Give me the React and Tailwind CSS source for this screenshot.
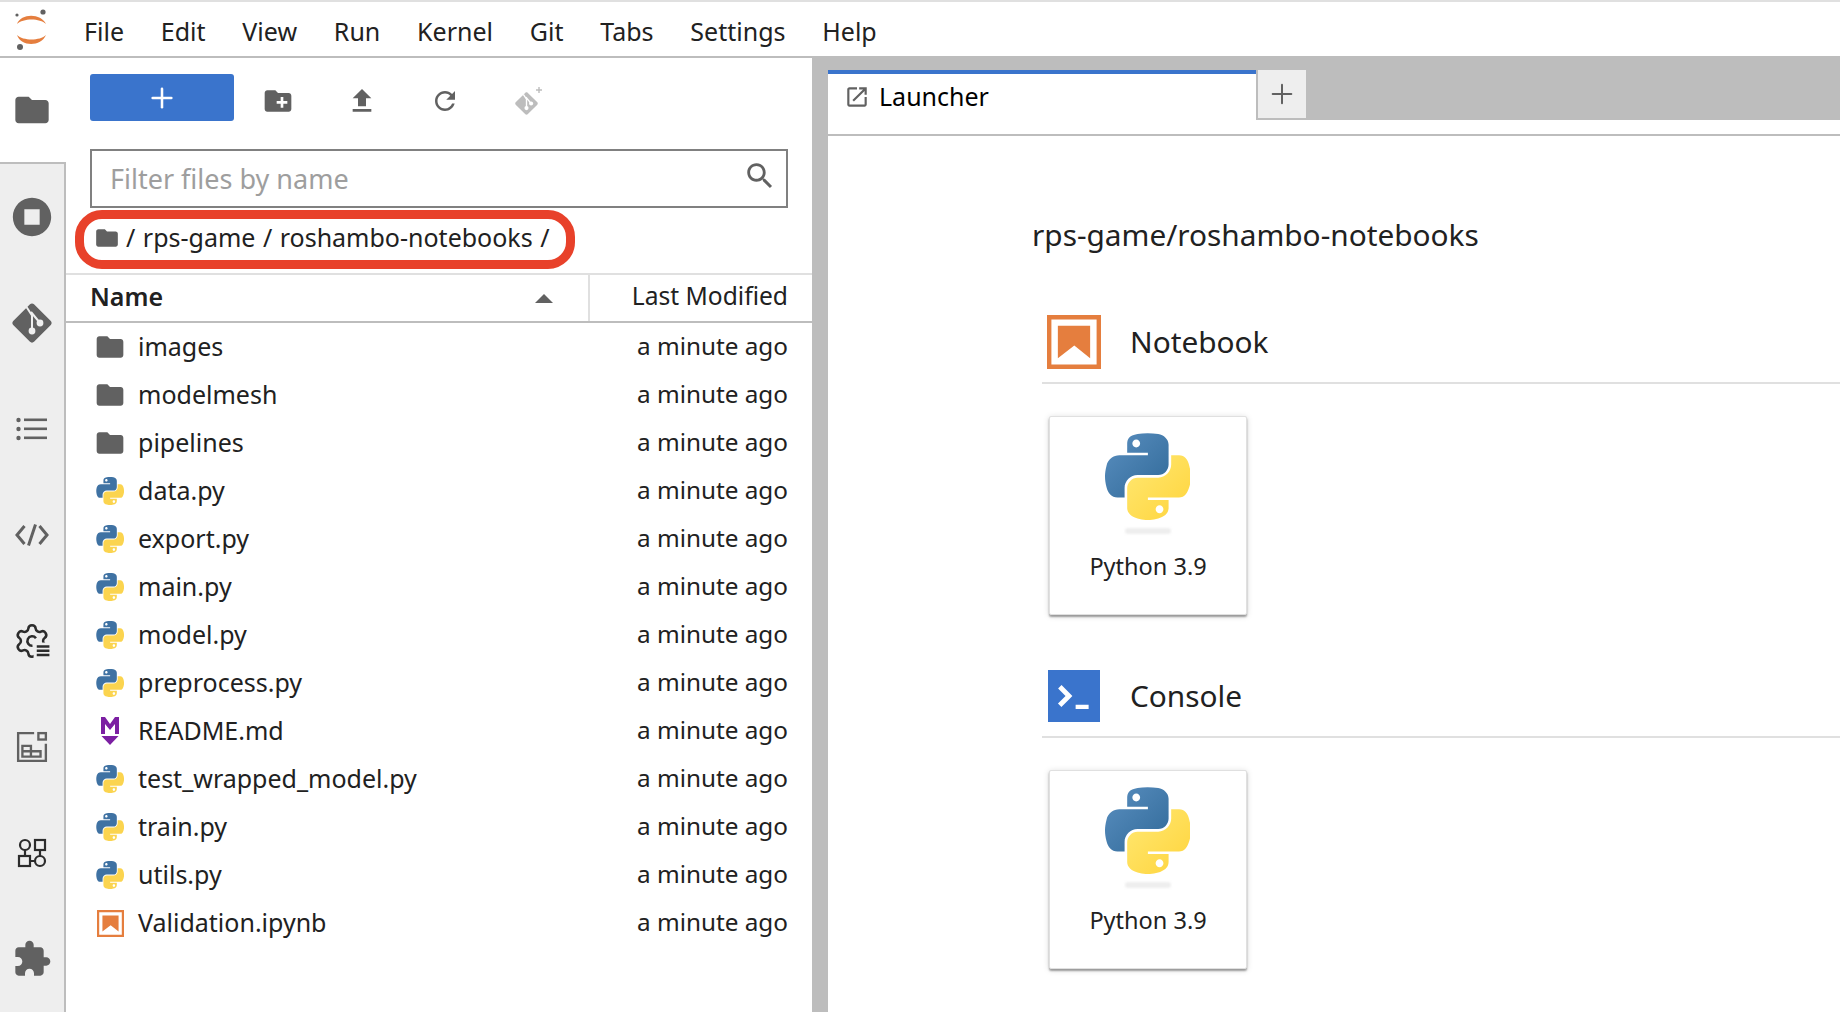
import { CodeXml, Plus } from 'lucide-react';

const FOLDER = 'M10 4H4c-1.1 0-1.99.9-1.99 2L2 18c0 1.1.9 2 2 2h16c1.1 0 2-.9 2-2V8c0-1.1-.9-2-2-2h-8l-2-2z';
const BLUE_PATH = 'M 54.918785,9.1927421e-4 C 50.335132,0.02221727 45.957846,0.41313697 42.106285,1.0946693 30.760069,3.0991731 28.700036,7.2947714 28.700035,15.032169 v 10.21875 h 26.8125 v 3.40625 h -26.8125 -10.0625 c -7.792459,0 -14.6157588,4.683717 -16.7499998,13.59375 -2.46181998,10.212966 -2.57101508,16.586023 0,27.25 1.9059283,7.937852 6.4575432,13.593748 14.2499998,13.59375 h 9.21875 v -12.25 c 0,-8.849902 7.657144,-16.656248 16.75,-16.65625 h 26.78125 c 7.454951,0 13.406253,-6.138164 13.40625,-13.625 v -25.53125 c 0,-7.2663386 -6.12998,-12.7247771 -13.40625,-13.9374997 C 64.281548,0.32794397 59.502438,-0.02037903 54.918785,9.1927421e-4 Z m -14.5,8.21875012579 c 2.769547,0 5.03125,2.2986456 5.03125,5.1249996 -2e-6,2.816336 -2.261703,5.09375 -5.03125,5.09375 -2.779476,-1e-6 -5.03125,-2.277415 -5.03125,-5.09375 -10e-7,-2.826353 2.251774,-5.1249996 5.03125,-5.1249996 z';
const YELLOW_PATH = 'm 85.637535,28.657169 v 11.90625 c 0,9.230755 -7.825895,16.999999 -16.75,17 h -26.78125 c -7.335833,0 -13.406249,6.278483 -13.40625,13.625 v 25.531247 c 0,7.266344 6.318588,11.540324 13.40625,13.625004 8.487331,2.49561 16.626237,2.94663 26.78125,0 6.750155,-1.95439 13.406253,-5.88761 13.40625,-13.625004 V 86.500919 h -26.78125 v -3.40625 h 26.78125 13.406254 c 7.792461,0 10.696251,-5.435408 13.406241,-13.59375 2.79933,-8.398886 2.74474,-16.475776 0,-27.25 -1.92578,-7.757441 -5.60387,-13.59375 -13.406241,-13.59375 z m -15.0625,64.65625 c 2.779478,3e-6 5.03125,2.277417 5.03125,5.093747 -2e-6,2.826354 -2.251775,5.125004 -5.03125,5.125004 -2.76955,0 -5.03125,-2.29865 -5.03125,-5.125004 2e-6,-2.81633 2.261697,-5.093747 5.03125,-5.093747 z';

const files = [
  { name: 'images', type: 'folder' },
  { name: 'modelmesh', type: 'folder' },
  { name: 'pipelines', type: 'folder' },
  { name: 'data.py', type: 'py' },
  { name: 'export.py', type: 'py' },
  { name: 'main.py', type: 'py' },
  { name: 'model.py', type: 'py' },
  { name: 'preprocess.py', type: 'py' },
  { name: 'README.md', type: 'md' },
  { name: 'test_wrapped_model.py', type: 'py' },
  { name: 'train.py', type: 'py' },
  { name: 'utils.py', type: 'py' },
  { name: 'Validation.ipynb', type: 'nb' },
];

const menus = ['File', 'Edit', 'View', 'Run', 'Kernel', 'Git', 'Tabs', 'Settings', 'Help'];

function Mat({ d, className }) {
  return (
    <svg viewBox="0 0 24 24" className={className} fill="#616161" fillRule="evenodd">
      <path d={d} />
    </svg>
  );
}

function JupyterLogo() {
  return (
    <svg viewBox="0 0 40 44" className="w-[40px] h-[44px]">
      <path d="M5 17C9 6 29 6 34 17C28 11 11 11 5 17Z" fill="#e57e3e" />
      <path d="M5 28C11 34 28 34 34 28C29 40 9 40 5 28Z" fill="#e57e3e" />
      <circle cx="31" cy="5" r="2.6" fill="#616161" />
      <circle cx="5" cy="8" r="1.6" fill="#616161" />
      <circle cx="8" cy="40" r="3" fill="#616161" />
    </svg>
  );
}

function PythonFlat({ className }) {
  return (
    <svg viewBox="0 0 110 112" className={className}>
      <path d={BLUE_PATH} fill="#3f72a3" />
      <path d={YELLOW_PATH} fill="#fbd44f" />
    </svg>
  );
}

function PythonLogo({ id }) {
  return (
    <svg viewBox="0 0 110 112" className="w-[85px] h-[87px] -ml-[2px]">
      <defs>
        <linearGradient id={`${id}b`} x1="0" y1="0" x2="1" y2="1">
          <stop offset="0" stopColor="#5a8fc0" />
          <stop offset="1" stopColor="#306998" />
        </linearGradient>
        <linearGradient id={`${id}y`} x1="0" y1="0" x2="1" y2="1">
          <stop offset="0" stopColor="#ffe873" />
          <stop offset="1" stopColor="#ffd43b" />
        </linearGradient>
      </defs>
      <path d={BLUE_PATH} fill={`url(#${id}b)`} />
      <path d={YELLOW_PATH} fill={`url(#${id}y)`} />
    </svg>
  );
}

function NotebookIcon({ className }) {
  return (
    <svg viewBox="1.8 1.8 18.4 18.4" className={className} fill="#e57e3e">
      <path d="M18.7 3.3v15.4H3.3V3.3h15.4m1.5-1.5H1.8v18.4h18.4V1.8z" />
      <path d="M16.5 16.5l-5.4-4.3-5.6 4.3v-11h11z" />
    </svg>
  );
}

function MarkdownIcon() {
  return (
    <svg viewBox="0 0 20 28" className="w-[20px] h-[28px]" fill="#7b1fa2">
      <path d="M1 0H5L10 7L15 0H19V17H15V7L10 13L5 7V17H1Z" />
      <path d="M1.5 19H18.5L10 28Z" />
    </svg>
  );
}

// diamond git mark, the branches are knocked out in the background colour
function GitMark({ className, fill, bg }) {
  return (
    <svg viewBox="0 0 40 40" className={className}>
      <path d="M18 1.2C19.1.1 20.9.1 22 1.2L38.8 18C39.9 19.1 39.9 20.9 38.8 22L22 38.8C20.9 39.9 19.1 39.9 18 38.8L1.2 22C.1 20.9.1 19.1 1.2 18Z" fill={fill} />
      <path d="M14.5 4L20 12.5V28M19 9L28 20" fill="none" stroke={bg} strokeWidth="2" />
      <circle cx="20" cy="28" r="3.4" fill={bg} />
      <circle cx="28" cy="20" r="3.4" fill={bg} />
    </svg>
  );
}

function ListIcon() {
  return (
    <svg viewBox="0 0 32 24" className="w-[32px] h-[24px]" fill="#616161">
      <circle cx="2.5" cy="3" r="2.2" />
      <circle cx="2.5" cy="12" r="2.2" />
      <circle cx="2.5" cy="21" r="2.2" />
      <rect x="8" y="1.5" width="23" height="2.6" />
      <rect x="8" y="10.5" width="23" height="2.6" />
      <rect x="8" y="19.5" width="23" height="2.6" />
    </svg>
  );
}

function CodeIcon() {
  return (
    <svg viewBox="0 0 34 22" className="w-[34px] h-[22px]" fill="none" stroke="#616161" strokeWidth="3">
      <path d="M9.5 2L2 11L9.5 20" />
      <path d="M13.5 21.5L20.5 .5" />
      <path d="M24.5 2L32 11L24.5 20" />
    </svg>
  );
}

function GearListIcon() {
  return (
    <svg viewBox="0 0 24 24" className="w-[38px] h-[38px]" fill="none" stroke="#2c2c2c" strokeWidth="1.6">
      <path d="M9.671 4.136a2.34 2.34 0 0 1 4.659 0 2.34 2.34 0 0 0 3.319 1.915 2.34 2.34 0 0 1 2.33 4.033 2.34 2.34 0 0 0 0 3.831 2.34 2.34 0 0 1-2.33 4.033 2.34 2.34 0 0 0-3.319 1.915 2.34 2.34 0 0 1-4.659 0 2.34 2.34 0 0 0-3.32-1.915 2.34 2.34 0 0 1-2.33-4.033 2.34 2.34 0 0 0 0-3.831A2.34 2.34 0 0 1 6.35 6.051a2.34 2.34 0 0 0 3.319-1.915" />
      <path d="M14.5 10.2a3 3 0 1 0-2.2 4.8" />
      <rect x="13" y="13" width="11" height="11" fill="#eeeeee" stroke="none" />
      <path d="M15 15.5H23M15 18.2H23M15 20.9H23" />
    </svg>
  );
}

function DashIcon() {
  return (
    <svg viewBox="0 0 30 30" className="w-[32px] h-[32px]" fill="none" stroke="#616161" strokeWidth="2.2">
      <path d="M17 2H2V28H28V12" />
      <rect x="21" y="2" width="7" height="6" />
      <path d="M6 14H14V24H6ZM14 19H23V24H14ZM6 19H14" />
    </svg>
  );
}

function NodesIcon() {
  return (
    <svg viewBox="0 0 30 30" className="w-[30px] h-[30px]" fill="none" stroke="#2c2c2c" strokeWidth="2.2">
      <circle cx="8" cy="7" r="5" />
      <rect x="18" y="2" width="10" height="10" />
      <rect x="2" y="18" width="11" height="10" />
      <circle cx="23" cy="23" r="5" />
      <path d="M8 12V18M23 12V18M13 23H18" />
    </svg>
  );
}

function CloneIcon() {
  return (
    <svg viewBox="0 0 32 32" className="w-[32px] h-[32px]">
      <svg x="2" y="7" width="23" height="23" viewBox="0 0 40 40">
        <path d="M18 1.2C19.1.1 20.9.1 22 1.2L38.8 18C39.9 19.1 39.9 20.9 38.8 22L22 38.8C20.9 39.9 19.1 39.9 18 38.8L1.2 22C.1 20.9.1 19.1 1.2 18Z" fill="#bdbdbd" />
        <path d="M14.5 4L20 12.5V28M19 9L28 20" fill="none" stroke="#fff" strokeWidth="2.4" />
        <circle cx="20" cy="28" r="3.6" fill="#fff" />
        <circle cx="28" cy="20" r="3.6" fill="#fff" />
      </svg>
      <path d="M26 2V8M23 5H29" stroke="#bdbdbd" strokeWidth="1.4" />
    </svg>
  );
}

function SideTab({ children }) {
  return <div className="h-[106px] flex items-center justify-center">{children}</div>;
}

function Sidebar() {
  return (
    <div className="w-[66px] flex flex-col shrink-0">
      <div className="h-[104px] bg-white flex items-center justify-center pr-[2px]">
        <Mat d={FOLDER} className="w-[40px] h-[40px]" />
      </div>
      <div className="flex-1 bg-[#eeeeee] border-t-2 border-r-2 border-[#bdbdbd]">
        <SideTab>
          <Mat d="M12 2C6.48 2 2 6.48 2 12s4.48 10 10 10 10-4.48 10-10S17.52 2 12 2zm4 14H8V8h8v8z" className="w-[46px] h-[46px]" />
        </SideTab>
        <SideTab>
          <GitMark className="w-[40px] h-[40px]" fill="#616161" bg="#eeeeee" />
        </SideTab>
        <SideTab>
          <ListIcon />
        </SideTab>
        <SideTab>
          <CodeIcon />
        </SideTab>
        <SideTab>
          <GearListIcon />
        </SideTab>
        <SideTab>
          <DashIcon />
        </SideTab>
        <SideTab>
          <NodesIcon />
        </SideTab>
        <SideTab>
          <Mat d="M20.5 11H19V7c0-1.1-.9-2-2-2h-4V3.5C13 2.12 11.88 1 10.5 1S8 2.12 8 3.5V5H4c-1.1 0-1.99.9-1.99 2v3.8H3.5c1.49 0 2.7 1.21 2.7 2.7s-1.21 2.7-2.7 2.7H2V20c0 1.1.9 2 2 2h3.8v-1.5c0-1.49 1.21-2.7 2.7-2.7 1.49 0 2.7 1.21 2.7 2.7V22H17c1.1 0 2-.9 2-2v-4h1.5c1.38 0 2.5-1.12 2.5-2.5S21.88 11 20.5 11z" className="w-[40px] h-[40px]" />
        </SideTab>
      </div>
    </div>
  );
}

function FileIcon({ type }) {
  if (type === 'folder') return <Mat d={FOLDER} className="w-[32px] h-[32px]" />;
  if (type === 'py') return <PythonFlat className="w-[28px] h-[28px]" />;
  if (type === 'md') return <MarkdownIcon />;
  return <NotebookIcon className="w-[27px] h-[27px]" />;
}

function FileBrowser() {
  return (
    <div className="w-[746px] shrink-0 flex flex-col relative">
      <div className="flex items-start mt-[16px] ml-[24px] h-[47px]">
        <div className="w-[144px] h-[47px] bg-[#3a74cc] rounded-[3px] flex items-center justify-center">
          <Plus className="w-[32px] h-[32px] text-white" strokeWidth={1.9} />
        </div>
        <div className="flex items-center h-[47px] pt-[7px]">
          <div className="w-[87px] flex justify-center">
            <Mat d="M20 6h-8l-2-2H4c-1.1 0-1.99.9-1.99 2L2 18c0 1.1.9 2 2 2h16c1.1 0 2-.9 2-2V8c0-1.1-.9-2-2-2zm-1 8h-3v3h-2v-3h-3v-2h3V9h2v3h3v2z" className="w-[32px] h-[32px]" />
          </div>
          <div className="w-[83px] flex justify-center -ml-[1px]">
            <Mat d="M9 16h6v-6h4l-7-7-7 7h4zm-4 2h14v2H5z" className="w-[32px] h-[32px]" />
          </div>
          <div className="w-[84px] flex justify-center">
            <Mat d="M17.65 6.35C16.2 4.9 14.21 4 12 4c-4.42 0-7.99 3.58-7.99 8s3.57 8 7.99 8c3.73 0 6.84-2.55 7.73-6h-2.08c-.82 2.33-3.04 4-5.65 4-3.31 0-6-2.69-6-6s2.69-6 6-6c1.66 0 3.14.69 4.22 1.78L13 11h7V4l-2.35 2.35z" className="w-[30px] h-[30px]" />
          </div>
          <div className="w-[83px] flex justify-center">
            <CloneIcon />
          </div>
        </div>
      </div>

      <div className="mt-[28px] mx-[24px] h-[59px] border-2 border-[#808080] flex items-center justify-between pl-[18px] pr-[9px]">
        <span className="text-[27px] text-[#9e9e9e] mt-[2px]">Filter files by name</span>
        <Mat d="M15.5 14h-.79l-.28-.27C15.41 12.59 16 11.11 16 9.5 16 5.91 13.09 3 9.5 3S3 5.91 3 9.5 5.91 16 9.5 16c1.61 0 3.09-.59 4.23-1.57l.27.28v.79l5 4.99L20.49 19l-4.99-5zm-6 0C7.01 14 5 11.99 5 9.5S7.01 5 9.5 5 14 7.01 14 9.5 11.99 14 9.5 14z" className="w-[34px] h-[34px] mb-[5px]" />
      </div>

      <div className="h-[65px] pb-[6px] flex items-center pl-[28px] text-[25px] text-[#212121] whitespace-pre [word-spacing:1px]">
        <Mat d={FOLDER} className="w-[26px] h-[26px] mr-[6px]" />
        <span>/ rps-game / roshambo-notebooks /</span>
      </div>

      <div className="absolute left-[9px] top-[152px] w-[500px] h-[59px] border-[9px] border-[#e8412a] rounded-[27px]" />

      <div className="h-[50px] border-t-2 border-[#e0e0e0] border-b-2 border-b-[#bdbdbd] flex items-stretch text-[#212121] shrink-0">
        <div className="w-[524px] border-r-2 border-[#e0e0e0] flex items-center justify-between pl-[24px] pr-[35px] pb-[3px]">
          <span className="font-semibold text-[25px]">Name</span>
          <span className="mt-[3px] w-0 h-0 border-l-[9px] border-r-[9px] border-b-[9px] border-l-transparent border-r-transparent border-b-[#616161]" />
        </div>
        <div className="flex-1 flex items-center justify-end pr-[24px] pb-[3px] text-[24.6px]">Last Modified</div>
      </div>

      <div className="flex flex-col">
        {files.map((f) => (
          <div key={f.name} className="h-[48px] flex items-center pl-[28px] pr-[24px] text-[25px] text-[#212121]">
            <div className="w-[32px] flex justify-center">
              <FileIcon type={f.type} />
            </div>
            <span className="ml-[12px] flex-1">{f.name}</span>
            <span className="text-[24.3px] mb-[2px]">a minute ago</span>
          </div>
        ))}
      </div>
    </div>
  );
}

function KernelCard({ id }) {
  return (
    <div className="w-[198px] h-[199px] ml-[7px] mt-[32px] bg-white rounded-[2px] border border-[#e0e0e0] shadow-[0_2px_2px_rgba(0,0,0,0.35),0_1px_6px_rgba(0,0,0,0.15)] flex flex-col items-center pt-[16px]">
      <PythonLogo id={id} />
      <div className="w-[46px] h-[6px] mt-[8px] rounded-full bg-[#eeeeee] blur-[1px]" />
      <div className="mt-[16px] text-[23.5px] leading-[32px] text-[#212121]">Python 3.9</div>
    </div>
  );
}

function Launcher() {
  return (
    <div className="flex-1 min-w-0 flex flex-col">
      <div className="h-[78px] flex border-b-2 border-[#bdbdbd] shrink-0">
        <div className="w-[428px] flex flex-col">
          <div className="h-[12px] bg-[#bdbdbd]" />
          <div className="flex-1 bg-white border-t-4 border-[#3a74cc] flex items-center pl-[16px] pb-[14px] text-[25px] text-black">
            <Mat d="M19 19H5V5h7V3H5c-1.11 0-2 .9-2 2v14c0 1.1.89 2 2 2h14c1.1 0 2-.9 2-2v-7h-2v7zM14 3v2h3.59l-9.83 9.83 1.41 1.41L19 6.41V10h2V3h-7z" className="w-[26px] h-[26px] mr-[9px]" />
            Launcher
          </div>
        </div>
        <div className="flex-1 h-[62px] bg-[#bdbdbd] pt-[12px]">
          <div className="w-[50px] h-[50px] bg-[#eeeeee] border-l-2 border-b-2 border-[#bdbdbd] flex items-center justify-center">
            <Plus className="w-[32px] h-[32px] text-[#616161]" strokeWidth={1.5} />
          </div>
        </div>
      </div>

      <div className="pl-[214px] pt-[75px]">
        <div className="-ml-[10px] text-[29.8px] leading-[48px] text-[#212121]">rps-game/roshambo-notebooks</div>

        <div className="mt-[50px] h-[75px] flex items-center border-b-2 border-[#e0e0e0] pb-[7px]">
          <NotebookIcon className="w-[54px] h-[54px] ml-[5px]" />
          <span className="ml-[29px] text-[29.8px] text-[#212121]">Notebook</span>
        </div>
        <KernelCard id="nb" />

        <div className="mt-[47px] h-[76px] flex items-center border-b-2 border-[#e0e0e0] pb-[6px]">
          <svg viewBox="20 20 160 160" className="w-[52px] h-[52px] ml-[6px]">
            <rect x="20" y="20" width="160" height="160" fill="#3a74cc" />
            <path fill="#fff" d="M105 127.3h40v12.8h-40zM51.1 77L74 99.9l-23.3 23.3 10.5 10.5 23.3-23.3L95 99.9 84.5 89.4 61.6 66.5z" />
          </svg>
          <span className="ml-[30px] text-[29.8px] text-[#212121]">Console</span>
        </div>
        <KernelCard id="co" />
      </div>
    </div>
  );
}

export default function App() {
  return (
    <div className="w-[1840px] h-[1012px] overflow-hidden flex flex-col bg-white font-['Noto_Sans','Liberation_Sans',sans-serif]">
      <div className="h-[58px] shrink-0 border-t-2 border-t-[#e0e0e0] border-b-2 border-b-[#bdbdbd] flex items-center">
        <div className="w-[66px] flex justify-center -ml-[1px]">
          <JupyterLogo />
        </div>
        <div className="flex gap-[36.8px] ml-[19px] pt-[5px] text-[25px] text-[#212121]">
          {menus.map((m) => (
            <span key={m}>{m}</span>
          ))}
        </div>
      </div>
      <div className="flex-1 flex min-h-0">
        <Sidebar />
        <FileBrowser />
        <div className="w-[16px] shrink-0 bg-[#bdbdbd]" />
        <Launcher />
      </div>
    </div>
  );
}
